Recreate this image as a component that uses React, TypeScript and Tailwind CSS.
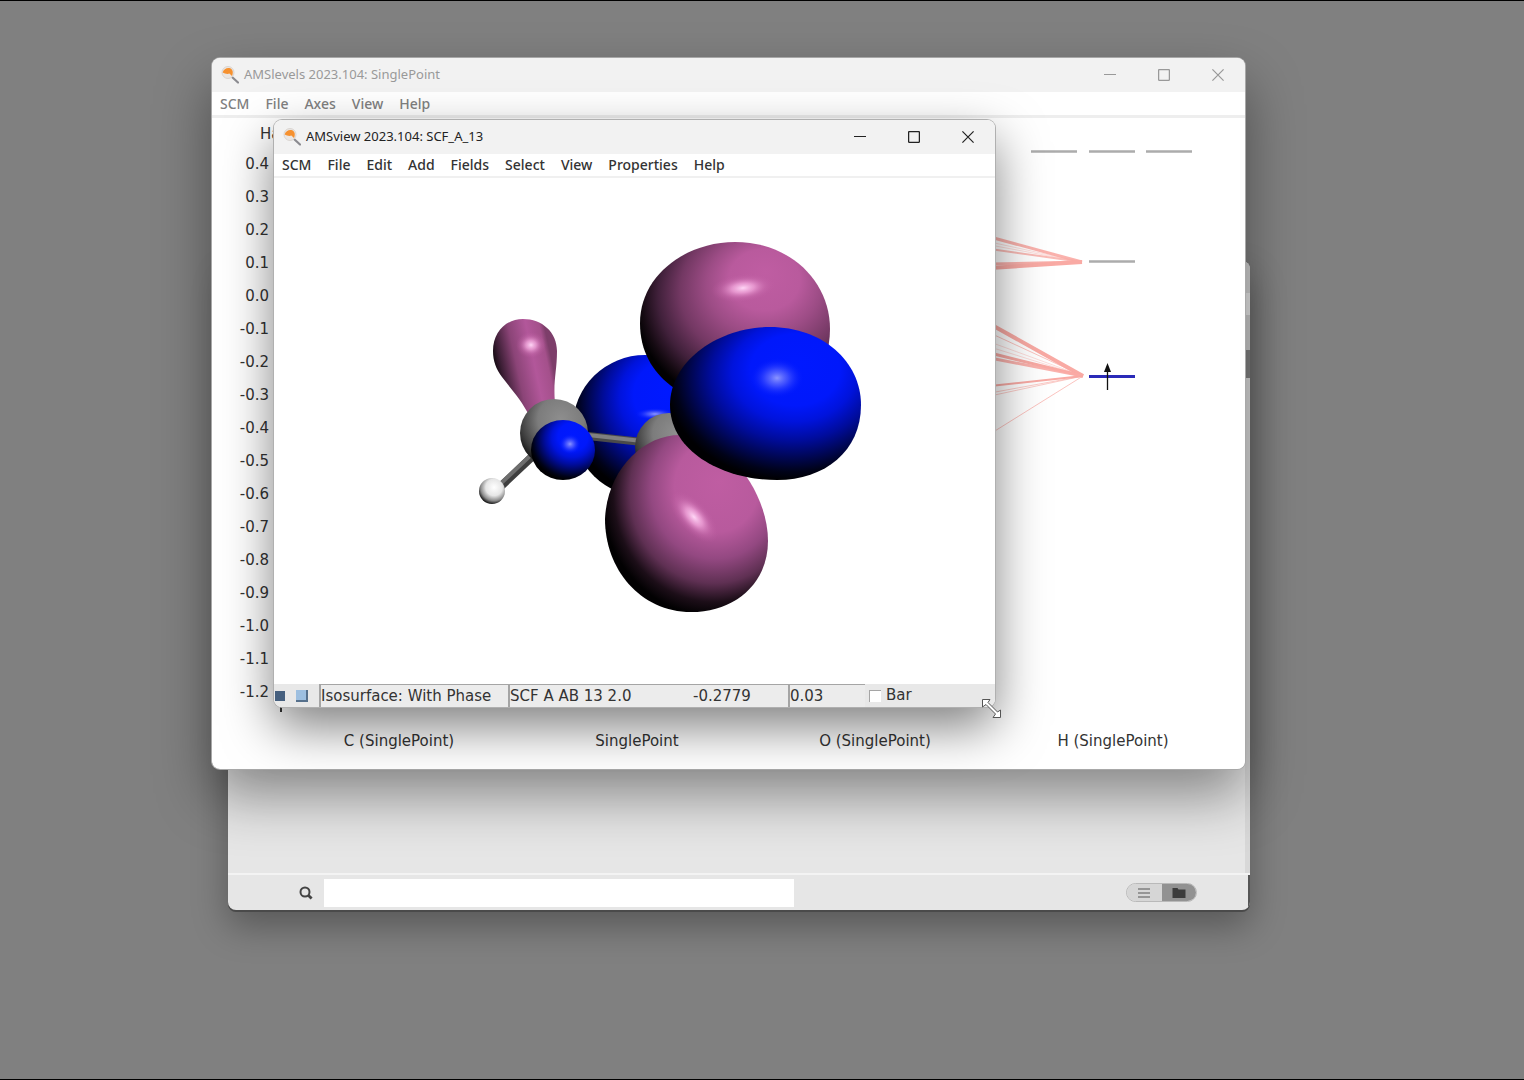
import type { ReactNode } from "react";
import clsx from "clsx";

const levelMenus = ["SCM", "File", "Axes", "View", "Help"];
const viewMenus = [
  "SCM",
  "File",
  "Edit",
  "Add",
  "Fields",
  "Select",
  "View",
  "Properties",
  "Help",
];

const axisValues = Array.from({ length: 17 }, (_, i) =>
  ((4 - i) / 10).toFixed(1)
);

const columns = [
  "C (SinglePoint)",
  "SinglePoint",
  "O (SinglePoint)",
  "H (SinglePoint)",
];

// Where each correlation line starts (x = 990), and how strong it is
const upperLines = [
  { y: 236, width: 3, opacity: 0.9 },
  { y: 241, width: 1, opacity: 0.4 },
  { y: 244, width: 1, opacity: 0.4 },
  { y: 248, width: 2, opacity: 0.8 },
  { y: 263, width: 3, opacity: 0.9 },
  { y: 267, width: 4, opacity: 1 },
];
const lowerLines = [
  { y: 323, width: 4, opacity: 1 },
  { y: 332, width: 1, opacity: 0.7 },
  { y: 341, width: 1, opacity: 0.4 },
  { y: 346, width: 1, opacity: 0.4 },
  { y: 352, width: 3, opacity: 1 },
  { y: 357, width: 3, opacity: 0.9 },
  { y: 385, width: 2, opacity: 1 },
  { y: 392, width: 1, opacity: 0.6 },
  { y: 395, width: 1, opacity: 0.6 },
  { y: 433, width: 1, opacity: 0.7 },
];

function AppIcon() {
  return (
    <svg viewBox="0 0 20 20" className="size-5 shrink-0" aria-hidden="true">
      <path d="M12 12 L18 17.5" stroke="#8b8b90" strokeWidth="2.2" strokeLinecap="round" />
      <circle cx="8" cy="7.5" r="6" fill="#ebe6e2" stroke="#dad5d1" strokeWidth="1" />
      <path
        d="M2.6 7.5 C4 3.2 9 1.8 11.8 4.5 C13.4 6.3 12.8 9 12 11 L9.4 8.6 C7.5 9.4 4.8 8.8 2.6 7.5 Z"
        fill="#f6912f"
      />
    </svg>
  );
}

function WindowButtons() {
  const button = "flex h-full w-[54px] items-center justify-center";
  return (
    <div className="ml-auto flex h-full">
      <button type="button" aria-label="Minimize" className={button}>
        <svg viewBox="0 0 12 12" className="size-3" stroke="currentColor" fill="none">
          <path d="M0 5.5 H12" strokeWidth="1.2" />
        </svg>
      </button>
      <button type="button" aria-label="Maximize" className={button}>
        <svg viewBox="0 0 12 12" className="size-3" stroke="currentColor" fill="none">
          <rect x="0.6" y="0.6" width="10.8" height="10.8" rx="0.8" strokeWidth="1.3" />
        </svg>
      </button>
      <button type="button" aria-label="Close" className={button}>
        <svg viewBox="0 0 12 12" className="size-3" stroke="currentColor" fill="none">
          <path d="M0.4 0.4 L11.6 11.6 M11.6 0.4 L0.4 11.6" strokeWidth="1.2" />
        </svg>
      </button>
    </div>
  );
}

function TitleBar({ title, active }: { title: string; active?: boolean }) {
  return (
    <header
      className={clsx(
        "flex h-[34px] shrink-0 items-center bg-[#f2f2f2] pl-2",
        active ? "text-[#222222]" : "text-[#999999]"
      )}
    >
      <AppIcon />
      <h1 className="ml-1 font-['Noto_Sans',sans-serif] text-[13px] whitespace-nowrap">
        {title}
      </h1>
      <WindowButtons />
    </header>
  );
}

function MenuBar({ items, className }: { items: string[]; className: string }) {
  return (
    <nav
      className={clsx(
        "flex shrink-0 items-center gap-4 px-2 font-['Noto_Sans',sans-serif] text-sm font-medium",
        className
      )}
    >
      {items.map((item) => (
        <button type="button" key={item}>
          {item}
        </button>
      ))}
    </nav>
  );
}

function LevelsChart() {
  return (
    <svg
      viewBox="269 117 976 591"
      className="h-[591px] min-w-0 flex-1 overflow-visible"
      aria-hidden="true"
    >
      <path d="M281 147 V711" stroke="#333333" strokeWidth="2" />
      <g stroke="#f9aaa4">
        {upperLines.map((line) => (
          <line
            key={line.y}
            x1="990"
            y1={line.y}
            x2="1082"
            y2="261"
            strokeWidth={line.width}
            strokeOpacity={line.opacity}
          />
        ))}
        {lowerLines.map((line) => (
          <line
            key={line.y}
            x1="990"
            y1={line.y}
            x2="1083"
            y2="375"
            strokeWidth={line.width}
            strokeOpacity={line.opacity}
          />
        ))}
      </g>
      <path
        d="M1031 150.5 H1077 M1089 150.5 H1135 M1146 150.5 H1192 M1089 260.5 H1135"
        stroke="#acacac"
        strokeWidth="2.4"
      />
      <path d="M1089 375.5 H1135" stroke="#2a2ab8" strokeWidth="3" />
      <path d="M1107.5 389 V370" stroke="#111111" strokeWidth="1.3" />
      <path d="M1107.5 362 L1111 371 H1104 Z" fill="#111111" />
    </svg>
  );
}

// Orbital lobes over the ball-and-stick model
function Molecule() {
  return (
    <svg
      viewBox="274 177 721 506"
      className="min-h-0 w-full flex-1"
      role="img"
      aria-label="SCF_A_13 isosurface"
    >
      <defs>
        <radialGradient id="pink" cx="0.64" cy="0.36" r="0.67" fx="0.66" fy="0.18">
          <stop offset="0" stopColor="#bf5da2" />
          <stop offset="0.28" stopColor="#b95a9d" />
          <stop offset="0.45" stopColor="#9c4c85" />
          <stop offset="0.65" stopColor="#733863" />
          <stop offset="0.82" stopColor="#40203a" />
          <stop offset="0.94" stopColor="#150a12" />
          <stop offset="1" stopColor="#020102" />
        </radialGradient>
        <radialGradient id="pinkLow" cx="0.66" cy="0.34" r="0.68" fx="0.7" fy="0.26">
          <stop offset="0" stopColor="#bf5da2" />
          <stop offset="0.38" stopColor="#b85a9d" />
          <stop offset="0.58" stopColor="#934881" />
          <stop offset="0.76" stopColor="#5f3053" />
          <stop offset="0.9" stopColor="#1c0e18" />
          <stop offset="1" stopColor="#020102" />
        </radialGradient>
        <radialGradient id="blue" cx="0.63" cy="0.35" r="0.65" fx="0.67" fy="0.24">
          <stop offset="0" stopColor="#0019ff" />
          <stop offset="0.36" stopColor="#0018fb" />
          <stop offset="0.5" stopColor="#0013dc" />
          <stop offset="0.66" stopColor="#000c9c" />
          <stop offset="0.82" stopColor="#00064e" />
          <stop offset="0.93" stopColor="#000218" />
          <stop offset="1" stopColor="#000002" />
        </radialGradient>
        <radialGradient id="gray" cx="0.6" cy="0.3" r="0.75">
          <stop offset="0" stopColor="#8e8e8e" />
          <stop offset="0.45" stopColor="#7c7c7c" />
          <stop offset="0.8" stopColor="#3c3c3c" />
          <stop offset="1" stopColor="#0c0c0c" />
        </radialGradient>
        <radialGradient id="white" cx="0.58" cy="0.36" r="0.64">
          <stop offset="0" stopColor="#ffffff" />
          <stop offset="0.5" stopColor="#e6e6e6" />
          <stop offset="0.8" stopColor="#8d8d8d" />
          <stop offset="1" stopColor="#1c1c1c" />
        </radialGradient>
        <linearGradient id="neck" x1="0" y1="0.5" x2="0.85" y2="0.22">
          <stop offset="0" stopColor="#050204" />
          <stop offset="0.14" stopColor="#3a1d33" />
          <stop offset="0.4" stopColor="#8b4477" />
          <stop offset="0.7" stopColor="#b2579a" />
          <stop offset="0.92" stopColor="#a4508b" />
          <stop offset="1" stopColor="#7d3e6a" />
        </linearGradient>
        <radialGradient id="shine">
          <stop offset="0" stopColor="#ffd6f6" />
          <stop offset="0.35" stopColor="#f3a8dd" stopOpacity="0.75" />
          <stop offset="0.7" stopColor="#d277b7" stopOpacity="0.3" />
          <stop offset="1" stopColor="#bf5da2" stopOpacity="0" />
        </radialGradient>
        <radialGradient id="blueShine">
          <stop offset="0" stopColor="#8c95ff" />
          <stop offset="0.4" stopColor="#5663ff" stopOpacity="0.7" />
          <stop offset="1" stopColor="#0019ff" stopOpacity="0" />
        </radialGradient>
      </defs>

      {/* rear lobe, then the bonds and the two carbons */}
      <ellipse cx="645" cy="425" rx="72" ry="71" fill="url(#blue)" />
      <ellipse cx="655" cy="413" rx="20" ry="6" fill="url(#blueShine)" />
      <path d="M588 435 L642 441" stroke="#4a4a4a" strokeWidth="8" />
      <path d="M588 434 L642 440" stroke="#808080" strokeWidth="4" />
      <circle cx="669" cy="446" r="34" fill="url(#gray)" />
      <path
        d="M523 318 C542 318 557 331 557 350 C557 370 553 380 555 402 L530 416 C521 398 511 388 502 376 C496 368 493 360 493 350 C493 331 506 318 523 318 Z"
        fill="url(#neck)"
      />
      <ellipse cx="531" cy="344" rx="15" ry="13" fill="url(#shine)" />
      <path d="M534 454 L497 489" stroke="#3e3e3e" strokeWidth="8" />
      <path d="M533 452 L496 487" stroke="#6e6e6e" strokeWidth="4" />
      <circle cx="554" cy="432" r="34" fill="url(#gray)" />
      <circle cx="492" cy="490" r="13" fill="url(#white)" />
      <ellipse cx="563" cy="449" rx="32" ry="30" fill="url(#blue)" />
      <ellipse cx="570" cy="443" rx="11" ry="10" fill="url(#blueShine)" />

      {/* front lobes */}
      <path
        d="M640 322 C640 275 685 241 735 241 C790 241 830 280 830 328 C830 380 790 405 735 405 C690 405 640 378 640 322 Z"
        fill="url(#pink)"
      />
      <ellipse cx="743" cy="287" rx="32" ry="14" fill="url(#shine)" transform="rotate(-6 743 287)" />
      <path
        d="M605 518 C607 470 642 434 680 434 C725 434 768 490 768 540 C768 582 735 611 691 611 C640 611 605 568 605 518 Z"
        fill="url(#pinkLow)"
      />
      <ellipse cx="694" cy="516" rx="32" ry="15" fill="url(#shine)" transform="rotate(48 694 516)" />
      <path
        d="M670 404 C670 360 718 326 770 326 C822 326 861 360 861 404 C861 450 825 479 777 479 C722 479 670 450 670 404 Z"
        fill="url(#blue)"
      />
      <ellipse cx="777" cy="377" rx="27" ry="20" fill="url(#blueShine)" />
    </svg>
  );
}

function Field({ className, children }: { className: string; children: ReactNode }) {
  return (
    <button
      type="button"
      className={clsx(
        "flex h-full items-center border-t border-l-2 border-[#a5a5a5] bg-[#ececec] whitespace-nowrap",
        className
      )}
    >
      {children}
    </button>
  );
}

function StatusBar() {
  return (
    <footer className="flex h-[23px] shrink-0 items-center bg-[#e8e8e8] text-[15px]">
      <button type="button" aria-label="Stop" className="ml-px size-[10px] bg-[#46607f]" />
      <button
        type="button"
        aria-label="Options"
        className="ml-[11px] size-3 border-r-2 border-b-2 border-[#56708c] bg-[#9dbfe0]"
      />
      <div className="ml-[11px] flex h-full">
        <Field className="w-[189px]">Isosurface: With Phase</Field>
        <Field className="w-[280px]">
          <span className="w-[183px] text-left">SCF A AB 13 2.0</span>
          <span>-0.2779</span>
        </Field>
        <input
          aria-label="Isovalue"
          defaultValue="0.03"
          className="h-full w-[77px] border-t border-l-2 border-[#a5a5a5] bg-[#ececec] outline-none"
        />
      </div>
      <label className="ml-1 flex items-center gap-[5px]">
        <input
          type="checkbox"
          className="size-3 appearance-none border-t border-l border-[#a5a5a5] bg-white"
        />
        Bar
      </label>
    </footer>
  );
}

function LevelsWindow() {
  return (
    <section className="absolute top-[57px] left-[212px] flex w-[1033px] flex-col overflow-hidden rounded-lg bg-white">
      <TitleBar title="AMSlevels 2023.104: SinglePoint" />
      <MenuBar items={levelMenus} className="h-[26px] border-b-3 border-[#eeeeee] text-[#808080]" />
      <div className="flex">
        <div className="w-[57px] shrink-0">
          <p className="h-[30px] pl-12 leading-[33px]">Ha</p>
          <ul className="text-right">
            {axisValues.map((value) => (
              <li key={value} className="h-[33px] leading-[33px]">
                {value}
              </li>
            ))}
          </ul>
        </div>
        <LevelsChart />
      </div>
      <div className="mr-[13px] ml-[68px] grid h-[60px] grid-cols-4 pt-[22px] text-center leading-5">
        {columns.map((name) => (
          <span key={name}>{name}</span>
        ))}
      </div>
    </section>
  );
}

function ViewWindow() {
  return (
    <section className="absolute top-[119px] left-[274px] flex h-[587px] w-[721px] flex-col overflow-hidden rounded-lg bg-white shadow-[0_0_0_1px_#b0b0b0,0_20px_50px_rgba(0,0,0,0.5)]">
      <TitleBar title="AMSview 2023.104: SCF_A_13" active />
      <MenuBar items={viewMenus} className="h-[24px] border-b-2 border-[#f0f0f0] text-[#333333]" />
      <Molecule />
      <StatusBar />
    </section>
  );
}

function JobsWindow() {
  return (
    <section className="absolute top-[260px] left-[228px] flex h-[649px] w-[1022px] flex-col overflow-hidden rounded-lg bg-[#e6e6e6] shadow-[0_2px_0_0_#4a4a4a,0_16px_36px_rgba(0,0,0,0.32)]">
      <div className="flex flex-1 flex-col items-end border-b-2 border-[#f3f3f3]">
        <div className="h-8 w-[5px] bg-[#cfcfcf]" />
        <div className="h-[22px] w-[5px] bg-[#e4e4e4]" />
        <div className="h-[35px] w-[5px] bg-[#c9c9c9]" />
        <div className="h-7 w-[5px] bg-[#808080]" />
        <div className="w-[5px] flex-1 bg-[#d8d8d8]" />
      </div>
      <div className="flex h-[35px] items-center border-r-2 border-[#555555] pr-[51px] pl-[71px]">
        <svg
          viewBox="0 0 14 14"
          className="size-[14px]"
          fill="none"
          stroke="#444444"
          strokeWidth="2"
          aria-hidden="true"
        >
          <circle cx="6" cy="6" r="4.5" />
          <path d="M9 9 L12.6 12.6" strokeWidth="2.8" />
        </svg>
        <input aria-label="Search" className="ml-[11px] h-7 w-[470px] bg-white outline-none" />
        <div className="ml-auto flex h-[19px] w-[71px] overflow-hidden rounded-full border border-[#b9b9b9]">
          <button
            type="button"
            aria-label="List"
            className="flex flex-1 items-center justify-center bg-[#d6d6d6]"
          >
            <svg viewBox="0 0 12 10" className="h-[10px] w-3" stroke="#808080" aria-hidden="true">
              <path d="M0 1 H12 M0 5 H12 M0 9 H12" strokeWidth="1.4" />
            </svg>
          </button>
          <button
            type="button"
            aria-label="Folders"
            className="flex flex-1 items-center justify-center bg-[#929292]"
          >
            <svg viewBox="0 0 14 10" className="h-[10px] w-[14px]" fill="#3c3c3c" aria-hidden="true">
              <path d="M0.5 0 H5.5 L6.5 1.5 H13.5 V10 H0.5 Z" />
            </svg>
          </button>
        </div>
      </div>
    </section>
  );
}

function ResizeCursor() {
  return (
    <svg
      viewBox="0 0 20 20"
      className="absolute top-[698px] left-[982px] size-5"
      fill="#ffffff"
      stroke="#555555"
      strokeWidth="1"
      aria-hidden="true"
    >
      <path d="M0.5 0.5 H8 L6 3.5 L15.5 13 L18.5 11 V18.5 H11 L13.5 15 L4 5.5 L0.5 8 Z" />
    </svg>
  );
}

export default function App() {
  return (
    <main className="relative min-h-screen overflow-hidden border-y border-black bg-[#808080] font-['DejaVu_Sans',sans-serif] text-[15px] text-[#333333]">
      <JobsWindow />
      <div className="absolute top-[57px] left-[212px] h-[711px] w-[1033px] rounded-lg shadow-[0_0_0_1px_#a8a8a8,0_26px_56px_rgba(0,0,0,0.42)]" />
      <LevelsWindow />
      <ViewWindow />
      <ResizeCursor />
    </main>
  );
}
